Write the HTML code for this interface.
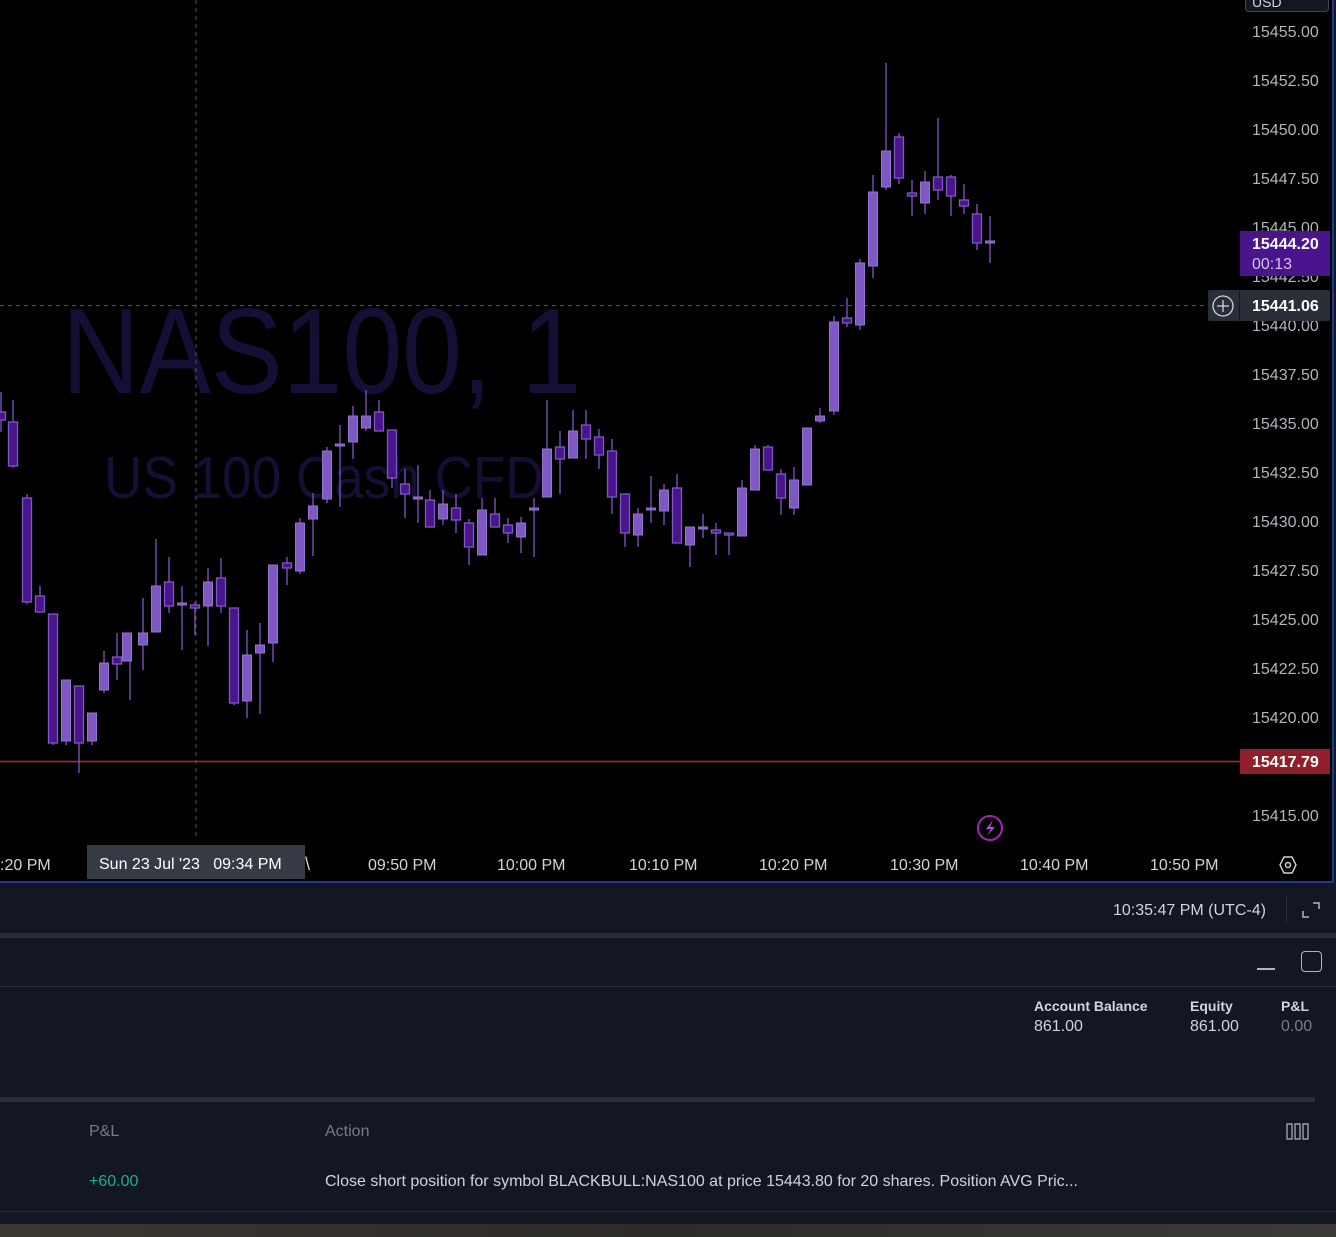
<!DOCTYPE html>
<html><head><meta charset="utf-8"><style>
*{margin:0;padding:0;box-sizing:border-box}
body{width:1336px;height:1237px;background:#131722;overflow:hidden;position:relative;font-family:"Liberation Sans",sans-serif;color:#d1d4dc}
.abs{position:absolute;white-space:nowrap}
.pl{position:absolute;left:1252px;font-size:16px;color:#b2b5be;line-height:16px;margin-top:2px}
.tl{position:absolute;top:857px;font-size:16px;color:#d1d4dc}
.t2{margin-top:2px}
</style></head><body>
<div class="abs" style="left:0;top:0;width:1334px;height:883px;background:#000;border-right:2px solid #1e3a8a;border-bottom:2px solid #1e3a8a"></div>
<div class="abs" style="left:62px;top:290px;font-size:122px;color:#150e35;transform:scaleX(0.88);transform-origin:left top;line-height:1">NAS100, 1</div>
<div class="abs" style="left:104px;top:449px;font-size:59px;color:#150e35;transform:scaleX(0.9);transform-origin:left top;line-height:1">US 100 Cash CFD</div>
<svg class="abs" style="left:0;top:0" width="1240" height="845">
<line x1="196" y1="0" x2="196" y2="840" stroke="#555" stroke-dasharray="4,4"/>
<line x1="0" y1="305.5" x2="1240" y2="305.5" stroke="#555" stroke-dasharray="4,4"/>
<line x1="0" y1="761.5" x2="1240" y2="761.5" stroke="#b22833" stroke-width="1.5"/>
<g stroke="#7e57c2" stroke-width="1.3">
<path d="M1 392V432M13 400V468M27 494V604M40 586V612M53 614V745M66 680V745M79 686V773M92 713V745M104 651V693M117 633V680M130 633V700M143 598V670M156 539V632M169 557V613M182 586V650M195 602V635M208 568V646M221 558V613M234 608V705M247 630V718M260 623V714M273 565V662M287 557V585M300 518V574M313 493V556M327 447V503M340 425V507M353 406V459M366 390V431M379 400V431M392 430V488M405 469V518M418 465V523M430 490V527M443 490V525M456 494V533M469 519V565M482 498V555M495 498V527M508 518V543M521 517V553M534 498V557M547 400V497M560 431V494M573 410V458M586 410V459M599 429V469M612 439V514M625 494V547M638 508V547M651 476V523M664 484V525M677 474V543M690 527V567M703 514V538M716 523V555M729 533V555M742 480V536M755 445V490M768 445V470M781 469V515M794 467V515M807 428V485M820 408V423M834 316V415M847 298V327M860 259V330M873 175V278M886 63V190M899 133V184M912 180V216M925 171V214M938 118V200M951 175V216M964 184V214M977 204V250M990 216V263"/>
</g>
<g fill="#7e57c2" stroke="#9575cd" stroke-width="1">
<rect x="122.5" y="633" width="9" height="28"/><rect x="99.5" y="663" width="9" height="27"/><rect x="87.5" y="713" width="9" height="28"/><rect x="61.5" y="680" width="9" height="61"/><rect x="138.5" y="633" width="9" height="12"/><rect x="151.5" y="586" width="9" height="46"/><rect x="203.5" y="582" width="9" height="24"/><rect x="242.5" y="655" width="9" height="46"/><rect x="255.5" y="645" width="9" height="8"/><rect x="268.5" y="565" width="9" height="78"/><rect x="295.5" y="523" width="9" height="48"/><rect x="308.5" y="506" width="9" height="13"/><rect x="322.5" y="451" width="9" height="48"/><rect x="348.5" y="416" width="9" height="26"/><rect x="361.5" y="416" width="9" height="12"/><rect x="438.5" y="504" width="9" height="15"/><rect x="477.5" y="510" width="9" height="45"/><rect x="516.5" y="523" width="9" height="14"/><rect x="542.5" y="449" width="9" height="48"/><rect x="568.5" y="431" width="9" height="27"/><rect x="633.5" y="514" width="9" height="21"/><rect x="659.5" y="490" width="9" height="21"/><rect x="685.5" y="527" width="9" height="18"/><rect x="737.5" y="488" width="9" height="48"/><rect x="750.5" y="449" width="9" height="41"/><rect x="789.5" y="480" width="9" height="28"/><rect x="802.5" y="428" width="9" height="57"/><rect x="815.5" y="416" width="9" height="5"/><rect x="829.5" y="322" width="9" height="89"/><rect x="855.5" y="263" width="9" height="62"/><rect x="868.5" y="192" width="9" height="74"/><rect x="881.5" y="151" width="9" height="36"/><rect x="920.5" y="182" width="9" height="21"/>
<rect x="177.5" y="603" width="9" height="2"/><rect x="335.5" y="444" width="9" height="2"/><rect x="413.5" y="497" width="9" height="2"/><rect x="529.5" y="508" width="9" height="2"/><rect x="646.5" y="508" width="9" height="2"/><rect x="698.5" y="527" width="9" height="2"/><rect x="985.5" y="241" width="9" height="2"/>
</g>
<g fill="#4a148c" stroke="#7e57c2" stroke-width="1.3">
<rect x="-3.5" y="412" width="9" height="8"/><rect x="8.5" y="422" width="9" height="44"/><rect x="22.5" y="498" width="9" height="104"/><rect x="35.5" y="596" width="9" height="16"/><rect x="48.5" y="614" width="9" height="129"/><rect x="74.5" y="686" width="9" height="57"/><rect x="112.5" y="657" width="9" height="7"/><rect x="164.5" y="582" width="9" height="24"/><rect x="190.5" y="605" width="9" height="3"/><rect x="216.5" y="578" width="9" height="28"/><rect x="229.5" y="608" width="9" height="95"/><rect x="282.5" y="563" width="9" height="5"/><rect x="374.5" y="412" width="9" height="19"/><rect x="387.5" y="430" width="9" height="48"/><rect x="400.5" y="484" width="9" height="10"/><rect x="425.5" y="500" width="9" height="27"/><rect x="451.5" y="508" width="9" height="12"/><rect x="464.5" y="523" width="9" height="24"/><rect x="490.5" y="514" width="9" height="13"/><rect x="503.5" y="525" width="9" height="8"/><rect x="555.5" y="447" width="9" height="12"/><rect x="581.5" y="425" width="9" height="14"/><rect x="594.5" y="437" width="9" height="18"/><rect x="607.5" y="451" width="9" height="46"/><rect x="620.5" y="494" width="9" height="39"/><rect x="672.5" y="488" width="9" height="55"/><rect x="711.5" y="530" width="9" height="3"/><rect x="724.5" y="533" width="9" height="2"/><rect x="763.5" y="447" width="9" height="23"/><rect x="776.5" y="474" width="9" height="24"/><rect x="842.5" y="318" width="9" height="5"/><rect x="894.5" y="137" width="9" height="41"/><rect x="907.5" y="193" width="9" height="3"/><rect x="933.5" y="177" width="9" height="13"/><rect x="946.5" y="177" width="9" height="19"/><rect x="959.5" y="200" width="9" height="6"/><rect x="972.5" y="214" width="9" height="29"/>
</g>
<circle cx="990" cy="828" r="12" fill="none" stroke="#9c27b0" stroke-width="2"/>
<path d="M993 820L986 829H991L987 836L995 827H990Z" fill="#b04fd0"/>
</svg>
<div class="abs" style="left:1245px;top:-10px;width:84px;height:22px;border:1px solid #434651;border-radius:4px;background:#131722"></div>
<div class="abs" style="left:1252px;top:-6px;font-size:14px;color:#d1d4dc">USD</div>
<div class="pl" style="top:23px">15455.00</div>
<div class="pl" style="top:72px">15452.50</div>
<div class="pl" style="top:121px">15450.00</div>
<div class="pl" style="top:170px">15447.50</div>
<div class="pl" style="top:219px">15445.00</div>
<div class="pl" style="top:268px">15442.50</div>
<div class="pl" style="top:317px">15440.00</div>
<div class="pl" style="top:366px">15437.50</div>
<div class="pl" style="top:415px">15435.00</div>
<div class="pl" style="top:464px">15432.50</div>
<div class="pl" style="top:513px">15430.00</div>
<div class="pl" style="top:562px">15427.50</div>
<div class="pl" style="top:611px">15425.00</div>
<div class="pl" style="top:660px">15422.50</div>
<div class="pl" style="top:709px">15420.00</div>
<div class="pl" style="top:807px">15415.00</div>
<div class="abs" style="left:1240px;top:231px;width:90px;height:45px;background:#4a148c"></div>
<div class="abs" style="left:1252px;top:236px;font-size:16px;font-weight:bold;color:#fff">15444.20</div>
<div class="abs" style="left:1252px;top:256px;font-size:16px;color:#d1c4e9">00:13</div>
<div class="abs" style="left:1208px;top:290px;width:122px;height:31px;background:#2a2e39;border-radius:2px"></div>
<div class="abs" style="left:1239px;top:290px;width:1px;height:31px;background:#131722"></div>
<svg class="abs" style="left:1211px;top:294px" width="24" height="24"><circle cx="12" cy="12" r="10" fill="none" stroke="#d1d4dc" stroke-width="1.3"/><path d="M12 6V18M6 12H18" stroke="#d1d4dc" stroke-width="1.3"/></svg>
<div class="abs" style="left:1252px;top:298px;font-size:16px;font-weight:bold;color:#fff">15441.06</div>
<div class="abs" style="left:1240px;top:749px;width:90px;height:25px;background:#8e1f2b"></div>
<div class="abs" style="left:1252px;top:754px;font-size:16px;font-weight:bold;color:#fff">15417.79</div>
<div class="tl" style="left:0">:20 PM</div>
<div class="tl" style="left:305px;font-size:18px;top:854px">\</div>
<div class="abs" style="left:87px;top:845px;width:218px;height:34px;background:#363a45"></div>
<div class="abs" style="left:99px;top:856px;font-size:16px;color:#fff">Sun 23 Jul '23&nbsp;&nbsp;&nbsp;09:34 PM</div>
<div class="tl" style="left:368px">09:50 PM</div>
<div class="tl" style="left:497px">10:00 PM</div>
<div class="tl" style="left:629px">10:10 PM</div>
<div class="tl" style="left:759px">10:20 PM</div>
<div class="tl" style="left:890px">10:30 PM</div>
<div class="tl" style="left:1020px">10:40 PM</div>
<div class="tl" style="left:1150px">10:50 PM</div>
<svg class="abs" style="left:1278px;top:855px" width="20" height="20"><path d="M6 2H14L18 10L14 18H6L2 10Z" fill="none" stroke="#d1d4dc" stroke-width="1.4"/><circle cx="10" cy="10" r="2.5" fill="none" stroke="#d1d4dc" stroke-width="1.4"/></svg>
<div class="abs t2" style="left:1113px;top:900px;font-size:16px;color:#d1d4dc">10:35:47 PM (UTC-4)</div>
<div class="abs" style="left:1286px;top:895px;width:1px;height:28px;background:#2a2e39"></div>
<svg class="abs" style="left:1300px;top:899px" width="22" height="22"><path d="M3 12V18H9M13 4H19V10" fill="none" stroke="#b2b5be" stroke-width="1.5"/></svg>
<div class="abs" style="left:0;top:933px;width:1336px;height:5px;background:#2a2e39"></div>
<div class="abs" style="left:1257px;top:968px;width:18px;height:1.5px;background:#b2b5be"></div>
<div class="abs" style="left:1301px;top:951px;width:21px;height:21px;border:1.5px solid #b2b5be;border-radius:4px"></div>
<div class="abs" style="left:0;top:986px;width:1336px;height:1px;background:#2a2e39"></div>
<div class="abs t2" style="left:1034px;top:996px;font-size:14px;font-weight:bold;color:#d1d4dc">Account Balance</div>
<div class="abs t2" style="left:1190px;top:996px;font-size:14px;font-weight:bold;color:#d1d4dc">Equity</div>
<div class="abs t2" style="left:1281px;top:996px;font-size:14px;font-weight:bold;color:#d1d4dc">P&amp;L</div>
<div class="abs t2" style="left:1034px;top:1016px;font-size:16px;color:#d1d4dc">861.00</div>
<div class="abs t2" style="left:1190px;top:1016px;font-size:16px;color:#d1d4dc">861.00</div>
<div class="abs t2" style="left:1281px;top:1016px;font-size:16px;color:#787b86">0.00</div>
<div class="abs" style="left:0;top:1097px;width:1315px;height:5px;background:#2a2e39"></div>
<div class="abs t2" style="left:89px;top:1121px;font-size:16px;color:#787b86">P&amp;L</div>
<div class="abs t2" style="left:325px;top:1121px;font-size:16px;color:#787b86">Action</div>
<svg class="abs" style="left:1286px;top:1123px" width="24" height="17"><path d="M1 1H6V16H1ZM9 1H14V16H9ZM17 1H22V16H17Z" fill="none" stroke="#b2b5be" stroke-width="1.2"/></svg>
<div class="abs t2" style="left:89px;top:1171px;font-size:16px;color:#22ab94">+60.00</div>
<div class="abs t2" style="left:325px;top:1171px;font-size:16px;color:#d1d4dc">Close short position for symbol BLACKBULL:NAS100 at price 15443.80 for 20 shares. Position AVG Pric...</div>
<div class="abs" style="left:0;top:1211px;width:1336px;height:1px;background:#2a2e39"></div>
<div class="abs" style="left:0;top:1224px;width:1336px;height:13px;background:linear-gradient(90deg,#3a3630,#2e2c28 50%,#3b3a36)"></div>
</body></html>
